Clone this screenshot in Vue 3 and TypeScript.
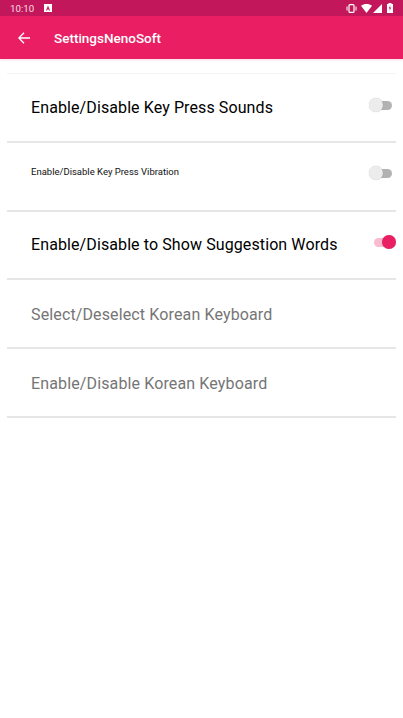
<script setup lang="ts">
interface Row { label: string; kind: 'big' | 'small' | 'off'; toggle?: 'on' | 'off' }
const rows: Row[] = [
  { label: 'Enable/Disable Key Press Sounds', kind: 'big', toggle: 'off' },
  { label: 'Enable/Disable Key Press Vibration', kind: 'small', toggle: 'off' },
  { label: 'Enable/Disable to Show Suggestion Words', kind: 'big', toggle: 'on' },
  { label: 'Select/Deselect Korean Keyboard', kind: 'off' },
  { label: 'Enable/Disable Korean Keyboard', kind: 'off' },
]
</script>

<template>
  <div class="screen">
    <div class="status">
      <span class="time">10:10</span>
      <svg class="notif" width="8" height="8" viewBox="0 0 8 8"><path fill="#fff" fill-rule="evenodd" d="M0 0h8v8H0zM4 1.6 2 6.4h1l.4-1h1.2l.4 1h1z"/></svg>
      <span class="grow"></span>
      <svg width="11" height="9" viewBox="0 0 11 9" class="vib"><rect x="3" y="0.6" width="5" height="7.8" rx="1" fill="none" stroke="#fff" stroke-width="1.2"/><rect x="0.5" y="2.5" width="1" height="4" fill="#fff"/><rect x="9.5" y="2.5" width="1" height="4" fill="#fff"/></svg>
      <svg width="11" height="9" viewBox="0 0 11 9" class="wifi"><path fill="#fff" d="M0 1.8C3-.6 8-.6 11 1.8L5.5 9z"/></svg>
      <svg width="9" height="9" viewBox="0 0 9 9" class="sig"><path fill="#fff" d="M9 0v9H0z"/></svg>
      <svg width="6" height="10" viewBox="0 0 6 10" class="bat"><path fill="#fff" d="M1.5 0h3v1H6v9H0V1h1.5z"/><path fill="#c2185b" d="M3.4 2 1.8 5.4h1.1L2.6 8l1.6-3.4H3.1z"/></svg>
    </div>
    <header class="bar">
      <svg class="back" width="12" height="12" viewBox="0 0 12 12"><path fill="none" stroke="#fff" stroke-width="1.3" d="M12 6H1M6 .8.9 6 6 11.2"/></svg>
      <span class="title">SettingsNenoSoft</span>
    </header>
    <main class="list">
      <div class="top-line"></div>
      <div v-for="r in rows" :key="r.label" class="row">
        <span :class="['label', r.kind]">{{ r.label }}</span>
        <span v-if="r.toggle" :class="['switch', r.toggle, r.kind]">
          <span class="track"></span>
          <span class="thumb"></span>
        </span>
      </div>
    </main>
  </div>
</template>

<style scoped>
.screen { width: 403px; height: 718px; background: #fff; font-family: Roboto, sans-serif; overflow: hidden; }
.status { height: 16px; background: #c2185b; color: #fff; display: flex; align-items: center; padding: 0 10px 0 10px; box-sizing: border-box; font-size: 10px; }
.time { color: #f8dce6; letter-spacing: 0; font-size: 9.7px; }
.notif { margin-left: 10px; }
.grow { flex: 1; }
.vib { margin-right: 4px; }
.wifi { margin-right: 1px; }
.sig { margin-right: 5px; }
.status svg { flex: none; }
.bar { height: 43px; background: #e91e63; display: flex; align-items: center; padding-left: 18px; box-shadow: 0 1px 2px rgba(233,30,99,.18); position: relative; }
.back { width: 12px; height: 12px; }
.title { margin-left: 24px; color: #fff; font-size: 13.5px; font-weight: 500; }
.list { padding: 0 7px; }
.top-line { height: 14px; border-bottom: 1px solid #f4f4f4; }
.row { height: 68.8px; box-sizing: border-box; border-bottom: 2px solid #e6e6e6; display: flex; align-items: center; padding: 0 0 0 24px; position: relative; }
.label { font-size: 16px; letter-spacing: 0.1px; color: #000; white-space: nowrap; }
.label.small { font-size: 9.5px; align-self: flex-start; margin-top: 23px; letter-spacing: 0; color: #111; }
.label.off { color: #757575; letter-spacing: 0.13px; margin-top: 2px; }
.switch { position: absolute; right: 4px; top: 24px; width: 23px; height: 14px; }
.switch.small { top: 23.5px; }
.track { position: absolute; right: 0; top: 2.5px; width: 20px; height: 9px; border-radius: 4.5px; background: #b2b2b2; }
.thumb { position: absolute; left: 0; top: 0; width: 14px; height: 14px; border-radius: 50%; background: #ececec; box-shadow: 0 0 1px rgba(0,0,0,.25); }
.switch.on { right: 0; width: 22px; top: 23.5px; }
.switch.on .track { background: #f8bbd0; left: 0; right: auto; width: 18px; }
.switch.on .thumb { background: #e91e63; left: 8px; }
</style>
